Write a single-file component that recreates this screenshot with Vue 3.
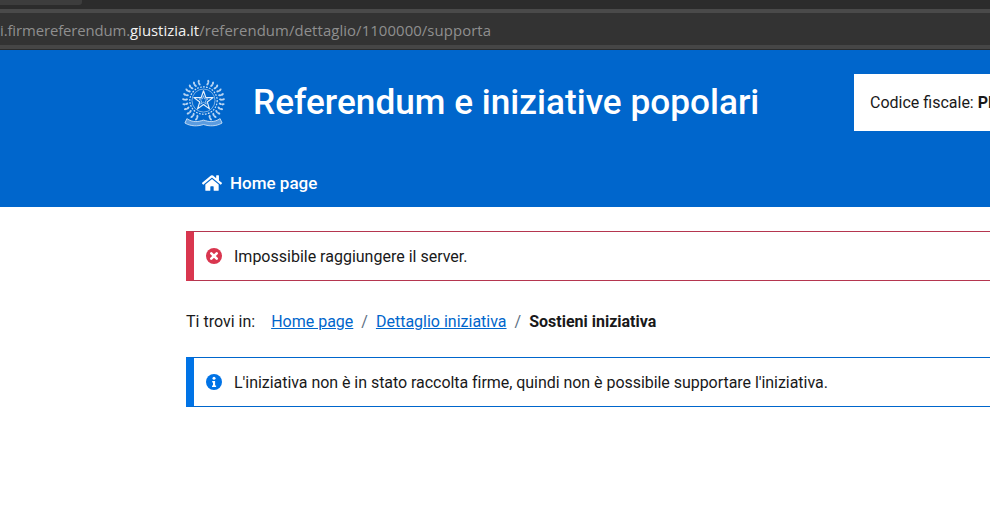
<script setup>
const crumbs = [
  { label: 'Home page' },
  { label: 'Dettaglio iniziativa' }
]
// Leaves of the wreath, placed round the emblem's centre on both sides.
const leaves = []
for (let side = -1; side <= 1; side += 2) {
  for (let i = 0; i < 11; i++) {
    const deg = side * (14 + i * 14.500)
    const rad = (deg * Math.PI) / 180
    for (const [r, skew] of [[17.500, 20], [20.300, -20]]) {
      leaves.push({
        id: `${side}-${i}-${r}`,
        x: 22 + Math.sin(rad) * r,
        y: 22.500 - Math.cos(rad) * r,
        rot: deg + side * skew
      })
    }
  }
}
</script>

<template>
  <div class="page">
    <div class="chrome">
      <div class="tabstrip"><div class="tab"></div></div>
      <div class="urlbar">
        <span class="url"><span class="host">i.firmereferendum.</span><b>giustizia.it</b><span class="path">/referendum/dettaglio/1100000/supporta</span></span>
      </div>
    </div>

    <header class="header">
      <div class="brand-row">
        <svg class="emblem" viewBox="0 0 44 50" fill="none" stroke="#cfe2f6" aria-hidden="true">
          <ellipse
            v-for="l in leaves"
            :key="l.id"
            :cx="l.x"
            :cy="l.y"
            rx="1.050"
            ry="1.700"
            :transform="`rotate(${l.rot} ${l.x} ${l.y})`"
            fill="#b9d5f2"
            stroke="none"
          />
          <circle cx="22" cy="22.500" r="14" stroke-width="1.200" stroke-dasharray="1.800 1.300" />
          <circle cx="22" cy="22.500" r="11.800" stroke-width="0.600" />
          <path d="M22 12.500l2.400 7h7.400l-6 4.400 2.300 7.100-6.100-4.400-6.100 4.400 2.300-7.100-6-4.400h7.400z" stroke="#e6f0fb" stroke-width="1.200" stroke-linejoin="round" />
          <path d="M22 17.500l1.100 3.300h3.500l-2.800 2.100 1.100 3.300-2.900-2-2.900 2 1.100-3.300-2.800-2.100h3.500z" stroke-width="0.700" />
          <path d="M5 41c6 4 11 3.500 17 1.500c6 2 11 2.500 17-1.500l2 4.500c-6 3.500-13 3.500-19 1.500c-6 2-13 2-19-1.500z" stroke-width="0.900" fill="#5b9ce0" />
        </svg>
        <h1 class="title">Referendum e iniziative popolari</h1>
        <div class="fiscal">Codice fiscale: <strong>PL</strong></div>
      </div>
      <nav class="nav">
        <svg class="home" viewBox="0 0 576 512" aria-hidden="true">
          <path fill="#fff" d="M280.370 148.260L96 300.110V464a16 16 0 0 0 16 16l112.060-.29a16 16 0 0 0 15.920-16V368a16 16 0 0 1 16-16h64a16 16 0 0 1 16 16v95.640a16 16 0 0 0 16 16.050L464 480a16 16 0 0 0 16-16V300L295.670 148.260a12.190 12.190 0 0 0-15.300 0zM571.600 251.470L488 182.560V44.050a12 12 0 0 0-12-12h-56a12 12 0 0 0-12 12v72.610L318.470 43a48 48 0 0 0-61 0L4.340 251.470a12 12 0 0 0-1.600 16.900l25.500 31A12 12 0 0 0 45.150 301l235.220-193.740a12.190 12.190 0 0 1 15.300 0L530.900 301a12 12 0 0 0 16.900-1.600l25.500-31a12 12 0 0 0-1.700-16.930z" />
        </svg>
        <span>Home page</span>
      </nav>
    </header>

    <main class="content">
      <div class="alert danger">
        <svg class="alert-icon" viewBox="0 0 16 16" aria-hidden="true">
          <circle cx="8" cy="8" r="8" fill="#d9364f" />
          <path d="M5.300 5.300l5.400 5.400M10.700 5.300l-5.400 5.400" stroke="#fff" stroke-width="2.600" stroke-linecap="round" />
        </svg>
        <span>Impossibile raggiungere il server.</span>
      </div>

      <div class="breadcrumb">
        <span class="where">Ti trovi in:</span>
        <template v-for="c in crumbs" :key="c.label">
          <a class="crumb" href="#">{{ c.label }}</a>
          <span class="sep">/</span>
        </template>
        <strong>Sostieni iniziativa</strong>
      </div>

      <div class="alert info">
        <svg class="alert-icon" viewBox="0 0 16 16" aria-hidden="true">
          <circle cx="8" cy="8" r="8" fill="#0073e6" />
          <circle cx="8" cy="4.300" r="1.500" fill="#fff" />
          <path d="M6.200 7h2.900v4.600h1v1.400H6v-1.400h1V8.400h-.8z" fill="#fff" />
        </svg>
        <span class="info-text">L'iniziativa non è in stato raccolta firme, quindi non è possibile supportare l'iniziativa.</span>
      </div>
    </main>
  </div>
</template>

<style>
html, body { margin: 0; background: #fff; overflow: hidden; }
</style>

<style scoped>
.page {
  width: 990px;
  height: 507px;
  overflow: hidden;
  font-family: Roboto, "Liberation Sans", sans-serif;
  font-size: 16px;
  color: #19191a;
  background: #fff;
}
.chrome { background: #2c2c2c; height: 50px; box-sizing: border-box; padding-bottom: 1px; }
.tabstrip { height: 9px; }
.tab { width: 82px; height: 5px; background: #3d3d3d; border-radius: 0 0 3px 0; }
.urlbar {
  height: 40px;
  box-sizing: border-box;
  border-top: 4px solid #4a4a4a;
  border-bottom: 4px solid #464646;
  background: #333;
  display: flex;
  align-items: center;
  padding-top: 2px;
  white-space: nowrap;
}
.url { font-family: "Open Sans", sans-serif; font-size: 14.900px; color: #8f8f8f; }
.url b { font-weight: 400; color: #f2f2f2; }
.host { letter-spacing: -0.110px; }
.path { letter-spacing: 0.080px; }
.header { background: #06c; height: 157px; padding-left: 182px; box-sizing: border-box; }
.brand-row { display: flex; align-items: center; padding-top: 24px; height: 57px; }
.emblem { width: 43px; height: 50px; flex: none; margin-right: 28px; }
.title {
  margin: -2px 0 0;
  flex: none;
  width: 601px;
  font-family: Roboto, sans-serif;
  font-weight: 500;
  font-size: 35.200px;
  color: #fff;
  white-space: nowrap;
}
.fiscal {
  flex: none;
  width: 136px;
  height: 57px;
  background: #fff;
  box-sizing: border-box;
  padding-left: 16px;
  line-height: 57px;
  white-space: nowrap;
  overflow: hidden;
}
.nav {
  display: flex;
  align-items: center;
  gap: 8px;
  padding: 38px 0 0 20px;
  color: #fff;
  font-family: Roboto, sans-serif;
  font-weight: 500;
  font-size: 17px;
  line-height: 28px;
}
.home { width: 20px; height: 18px; flex: none; }
.content { padding: 24px 0 0 186px; }
.alert {
  width: 900px;
  height: 50px;
  box-sizing: border-box;
  border: 1px solid;
  border-left-width: 8px;
  display: flex;
  align-items: center;
  padding-left: 12px;
  gap: 12px;
  white-space: nowrap;
}
.danger { border-color: #b5364f; border-left-color: #d9364f; }
.info { border-color: #0066cc; border-left-color: #0073e6; }
.info-text { letter-spacing: -0.045px; }
.alert-icon { width: 16px; height: 16px; flex: none; }
.breadcrumb {
  display: flex;
  align-items: center;
  height: 26px;
  margin: 27px 0 23px;
  white-space: nowrap;
}
.where { margin-right: 16px; }
.crumb { color: #06c; text-decoration: underline; }
.sep { color: #5c6f82; margin: 0 8px; }
strong { font-weight: 700; }
</style>
